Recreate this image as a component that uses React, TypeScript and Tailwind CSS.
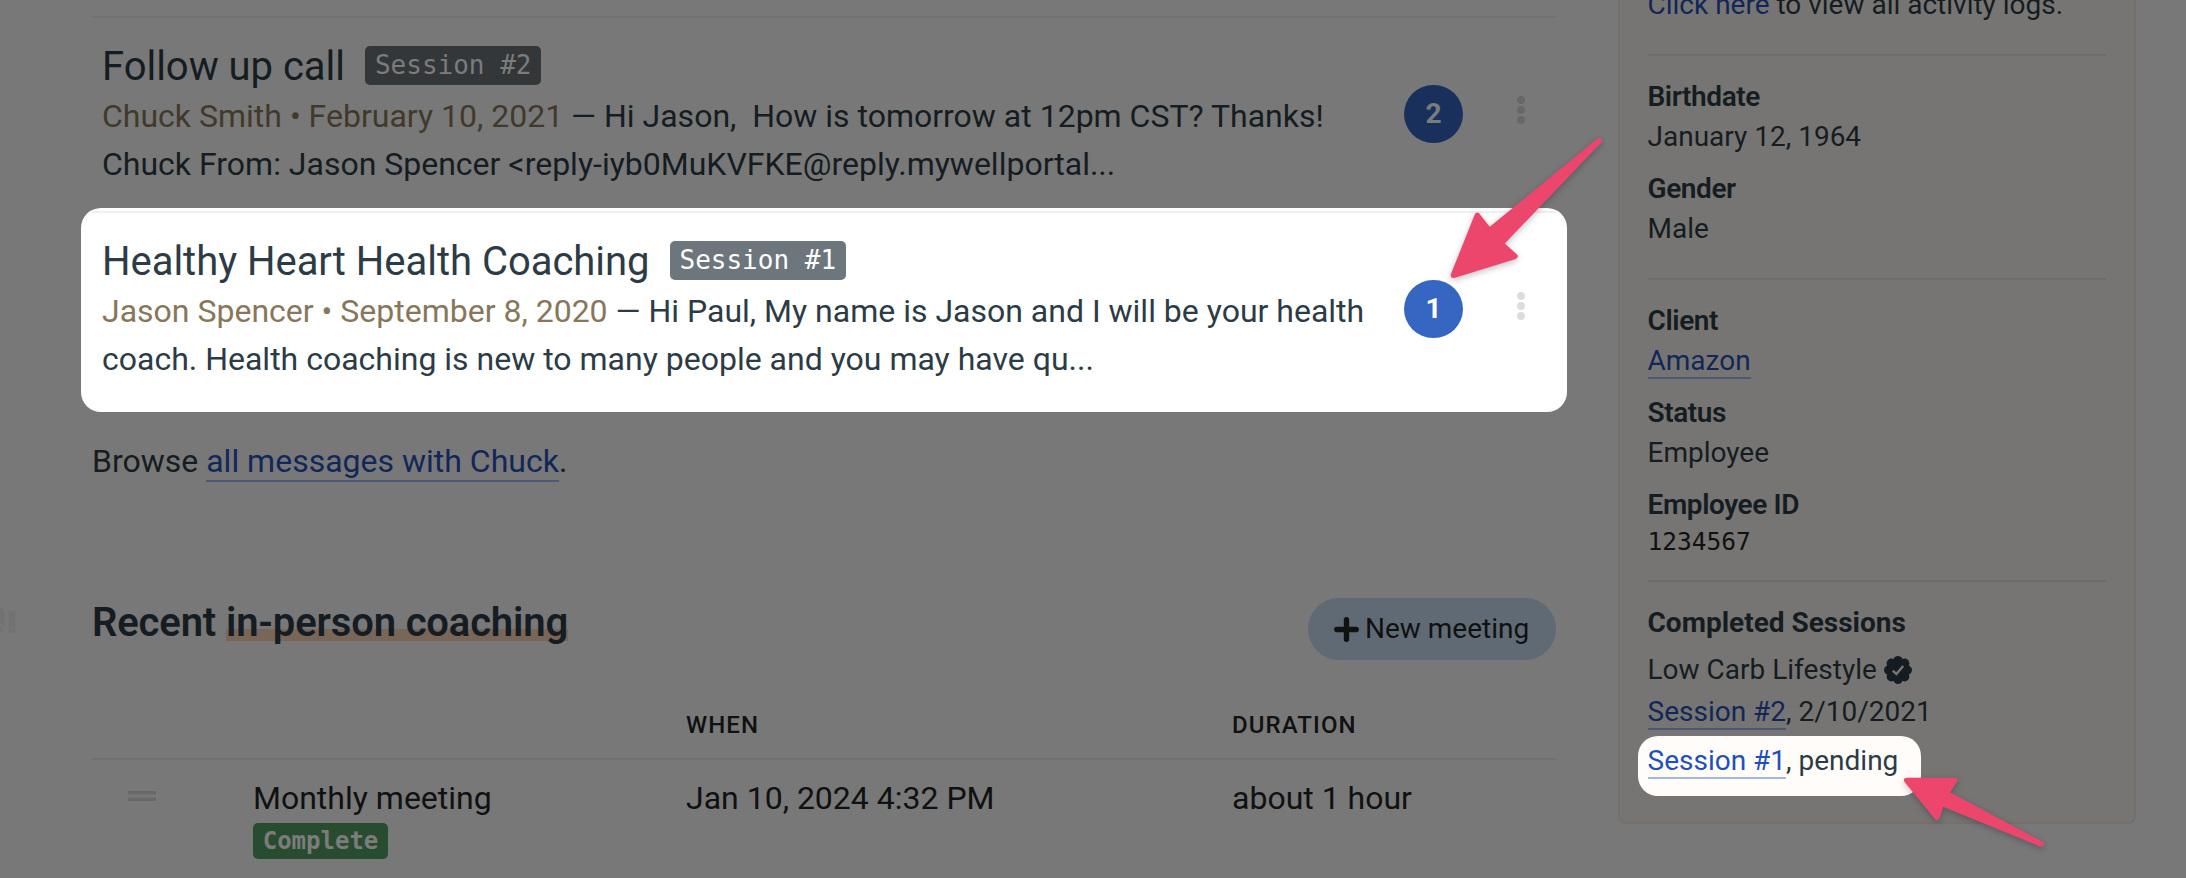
import type { ReactNode } from 'react'

interface MessageProps {
  title: string
  session: string
  meta: string
  lines: [string, string]
  count: number
  active?: boolean
}

function Dots({ active }: { active?: boolean }) {
  return (
    <svg
      viewBox="0 0 8 28"
      className={`h-7 w-2 ${active ? 'fill-[#dcdcdc]' : 'fill-[#676767]'}`}
    >
      <circle cx="4" cy="4" r="3.9" />
      <circle cx="4" cy="14" r="3.9" />
      <circle cx="4" cy="24" r="3.9" />
    </svg>
  )
}

function Message({ title, session, meta, lines, count, active }: MessageProps) {
  return (
    <div className="flex h-[195px] w-[1486px] pl-[21px]">
      <div className={`w-[1302px] ${active ? 'text-[#2c3b46]' : 'text-[#151d22]'}`}>
        <div className="flex h-[50px] items-start pt-[4px]">
          <h3 className="-mt-[3px] text-[40px] leading-[48px] tracking-[-0.03px] whitespace-nowrap">{title}</h3>
          <span
            className={`ml-5 flex h-[39px] items-center rounded-[5px] px-[10px] pb-px font-['DejaVu_Sans_Mono',monospace] text-[26px] ${
              active ? 'bg-[#6d757d] text-white' : 'bg-[#33373a] text-[#7c7c7c]'
            }`}
          >
            {session}
          </span>
        </div>
        <p className="text-[32px] leading-[48px] whitespace-pre">
          <span className={active ? 'text-[#87775a]' : 'text-[#413a2c]'}>{meta}</span>
          {` — ${lines[0]}`}
        </p>
        <p className="text-[32px] leading-[48px] whitespace-pre">{lines[1]}</p>
      </div>
      <div
        className={`mt-[43px] flex h-[58px] w-[59px] items-center justify-center rounded-full text-[28px] font-bold ${
          active ? 'bg-[#3567c2] text-white' : 'bg-[#19305c] text-[#7c7c7c]'
        }`}
      >
        {count}
      </div>
      <div className={`ml-[54px] ${active ? 'mt-[55px]' : 'mt-[54px]'}`}>
        <Dots active={active} />
      </div>
    </div>
  )
}

function Field({ label, children }: { label: string; children: ReactNode }) {
  return (
    <div className="h-[92px]">
      <dt className="font-semibold tracking-[-0.4px]">{label}</dt>
      <dd>{children}</dd>
    </div>
  )
}

function Link({ children, active }: { children: ReactNode; active?: boolean }) {
  return (
    <span
      className={`border-b-2 ${
        active ? 'border-[#a5b7e3] text-[#1f50b8]' : 'border-[#4b5876] text-[#122758]'
      }`}
    >
      {children}
    </span>
  )
}

function Profile() {
  return (
    <aside className="ml-[61px] h-[824px] w-[518px] rounded-b-[8px] border-2 border-t-0 border-[#75706c] bg-[#777573] pr-[28px] pl-[27.5px] text-[28px] leading-[40px] text-[#151d22]">
      <p className="-mt-[15px] h-[69px] whitespace-nowrap">
        <span className="text-[#122758]">Click here</span> to view all activity logs.
      </p>
      <hr className="border-t-2 border-[#6f6d6b]" />
      <dl className="h-[222px] pt-[21px]">
        <Field label="Birthdate">January 12, 1964</Field>
        <Field label="Gender">Male</Field>
      </dl>
      <hr className="border-t-2 border-[#6f6d6b]" />
      <dl className="h-[300px] pt-[21px]">
        <Field label="Client">
          <Link>Amazon</Link>
        </Field>
        <Field label="Status">Employee</Field>
        <Field label="Employee ID">
          <span className="-mt-[3px] block font-['DejaVu_Sans_Mono',monospace] text-[24.5px] text-[#101112]">
            1234567
          </span>
        </Field>
      </dl>
      <hr className="border-t-2 border-[#6f6d6b]" />
      <h4 className="mt-[21px] font-bold">Completed Sessions</h4>
      <p className="mt-[7px] flex items-center gap-[7px]">
        Low Carb Lifestyle
        <svg viewBox="0 0 28 28" className="h-7 w-7">
          <g fill="#151d22">
            <circle cx="14" cy="14" r="11.5" />
            <circle cx="14" cy="4.6" r="4.6" />
            <circle cx="20.6" cy="7.4" r="4.8" />
            <circle cx="23.4" cy="14" r="4.6" />
            <circle cx="20.6" cy="20.6" r="4.8" />
            <circle cx="14" cy="23.4" r="4.6" />
            <circle cx="7.4" cy="20.6" r="4.8" />
            <circle cx="4.6" cy="14" r="4.6" />
            <circle cx="7.4" cy="7.4" r="4.8" />
          </g>
          <path d="M8.8 14.6l3.6 3.4L19.2 10" fill="none" stroke="#777573" strokeWidth="2.4" />
        </svg>
      </p>
      <p className="mt-[2px]">
        <Link>Session #2</Link>, 2/10/2021
      </p>
      <p className="mt-[4px] -ml-[9.5px] flex h-[60px] w-[283px] rounded-[20px] bg-[#fffcfa] pt-[5px] pl-[9.5px] text-[#2c3b46]">
        <span>
          <Link active>Session #1</Link>, pending
        </span>
      </p>
    </aside>
  )
}

function Arrow({ points, className }: { points: string; className: string }) {
  return (
    <svg
      className={`absolute overflow-visible fill-[#ec466c] stroke-[#ec466c] drop-shadow-[0_2px_3px_rgba(0,0,0,0.25)] ${className}`}
      strokeWidth="16"
      strokeLinejoin="round"
    >
      <polygon points={points} />
    </svg>
  )
}

export default function App() {
  return (
    <div className="relative flex h-[878px] w-[2186px] overflow-hidden bg-[#787878] font-[Roboto,sans-serif]">
      <main className="w-[1557px] pl-[81px]">
        <div className="mt-4 ml-[11px] h-[2px] w-[1464px] bg-[#717171]" />
        <div className="-mt-px pt-[25px]">
          <Message
            title="Follow up call"
            session="Session #2"
            meta="Chuck Smith • February 10, 2021"
            lines={[
              'Hi Jason,  How is tomorrow at 12pm CST? Thanks!',
              'Chuck From: Jason Spencer <reply-iyb0MuKVFKE@reply.mywellportal...',
            ]}
            count={2}
          />
        </div>
        <div className="-mt-[29px] h-[204px] w-[1486px] rounded-[20px] bg-white pt-[3px]">
          <div className="mx-[11px] h-[2px] bg-[#f0f0f0]" />
          <div className="pt-[24px]">
            <Message
              title="Healthy Heart Health Coaching"
              session="Session #1"
              meta="Jason Spencer • September 8, 2020"
              lines={[
                'Hi Paul, My name is Jason and I will be your health',
                'coach. Health coaching is new to many people and you may have qu...',
              ]}
              count={1}
              active
            />
          </div>
        </div>
        <div className="ml-[11px] w-[1464px] text-[#101112]">
          <p className="mt-[25px] text-[32px] leading-[48px] text-[#151d22]">
            Browse <Link>all messages with Chuck</Link>.
          </p>
          <div className="mt-[113px] flex items-start justify-between">
            <h2 className="mt-px text-[40px] leading-[48px] font-semibold tracking-[-0.16px] text-[#151d22]">
              Recent{' '}
              <span className="bg-[linear-gradient(#786659,#786659)] bg-[length:100%_12px] bg-[position:0_30px] bg-no-repeat">
                in-person coaching
              </span>
            </h2>
            <button className="flex h-[62px] w-[248px] items-center rounded-full bg-[#606a74] pl-[26px] text-[28px]">
              <svg viewBox="0 0 25 25" className="mr-[6px] h-[25px] w-[25px]">
                <path
                  d="M12.5 2.8v19.4M2.8 12.5h19.4"
                  stroke="currentColor"
                  strokeWidth="5.4"
                  strokeLinecap="round"
                />
              </svg>
              New meeting
            </button>
          </div>
          <div className="flex h-[100px] items-center border-b-2 border-[#707070] pt-[32px] text-[24px] font-medium tracking-[1.1px]">
            <span className="ml-[594px] w-[546px]">WHEN</span>
            <span>DURATION</span>
          </div>
          <div className="flex pt-[14px] text-[32px] leading-[48px]">
            <svg viewBox="0 0 28 10" className="mt-[17px] mr-[97px] ml-[36px] h-[10px] w-7 fill-[#686868]">
              <rect width="28" height="3.3" />
              <rect y="6.7" width="28" height="3.3" />
            </svg>
            <div className="w-[433px]">
              <p>Monthly meeting</p>
              <span className="mt-px flex h-9 w-[135px] items-center justify-center rounded-[5px] bg-[#284c30] pb-px font-['DejaVu_Sans_Mono',monospace] text-[24px] font-bold text-[#7c7c7c]">
                Complete
              </span>
            </div>
            <p className="w-[546px]">Jan 10, 2024 4:32 PM</p>
            <p>about 1 hour</p>
          </div>
        </div>
      </main>
      <Profile />

      {/* section icon hanging off the left edge */}
      <svg viewBox="0 0 16 28" className="absolute top-[606px] left-0 h-7 w-4 fill-[#727272]">
        <path d="M0 0.5L4.3 5v16L0 16.5z" />
        <circle cx="0" cy="23.5" r="3" />
        <path d="M8.5 4.5h6.8v22H8.5z" />
        <circle cx="11" cy="22.3" r="1.2" fill="#787878" />
      </svg>

      <Arrow
        className="top-[120px] left-[1380px] h-[180px] w-[240px] origin-top-left [&>polygon]:scale-[0.33333]"
        points="220,466 292,286 328,332 658,62 363,371 405,409"
      />
      <Arrow
        className="top-[640px] left-[1880px] h-[220px] w-[190px] origin-top-left [&>polygon]:scale-[0.33333]"
        points="80,421 224,421 199,460 484,612 185,490 171,532"
      />
    </div>
  )
}
